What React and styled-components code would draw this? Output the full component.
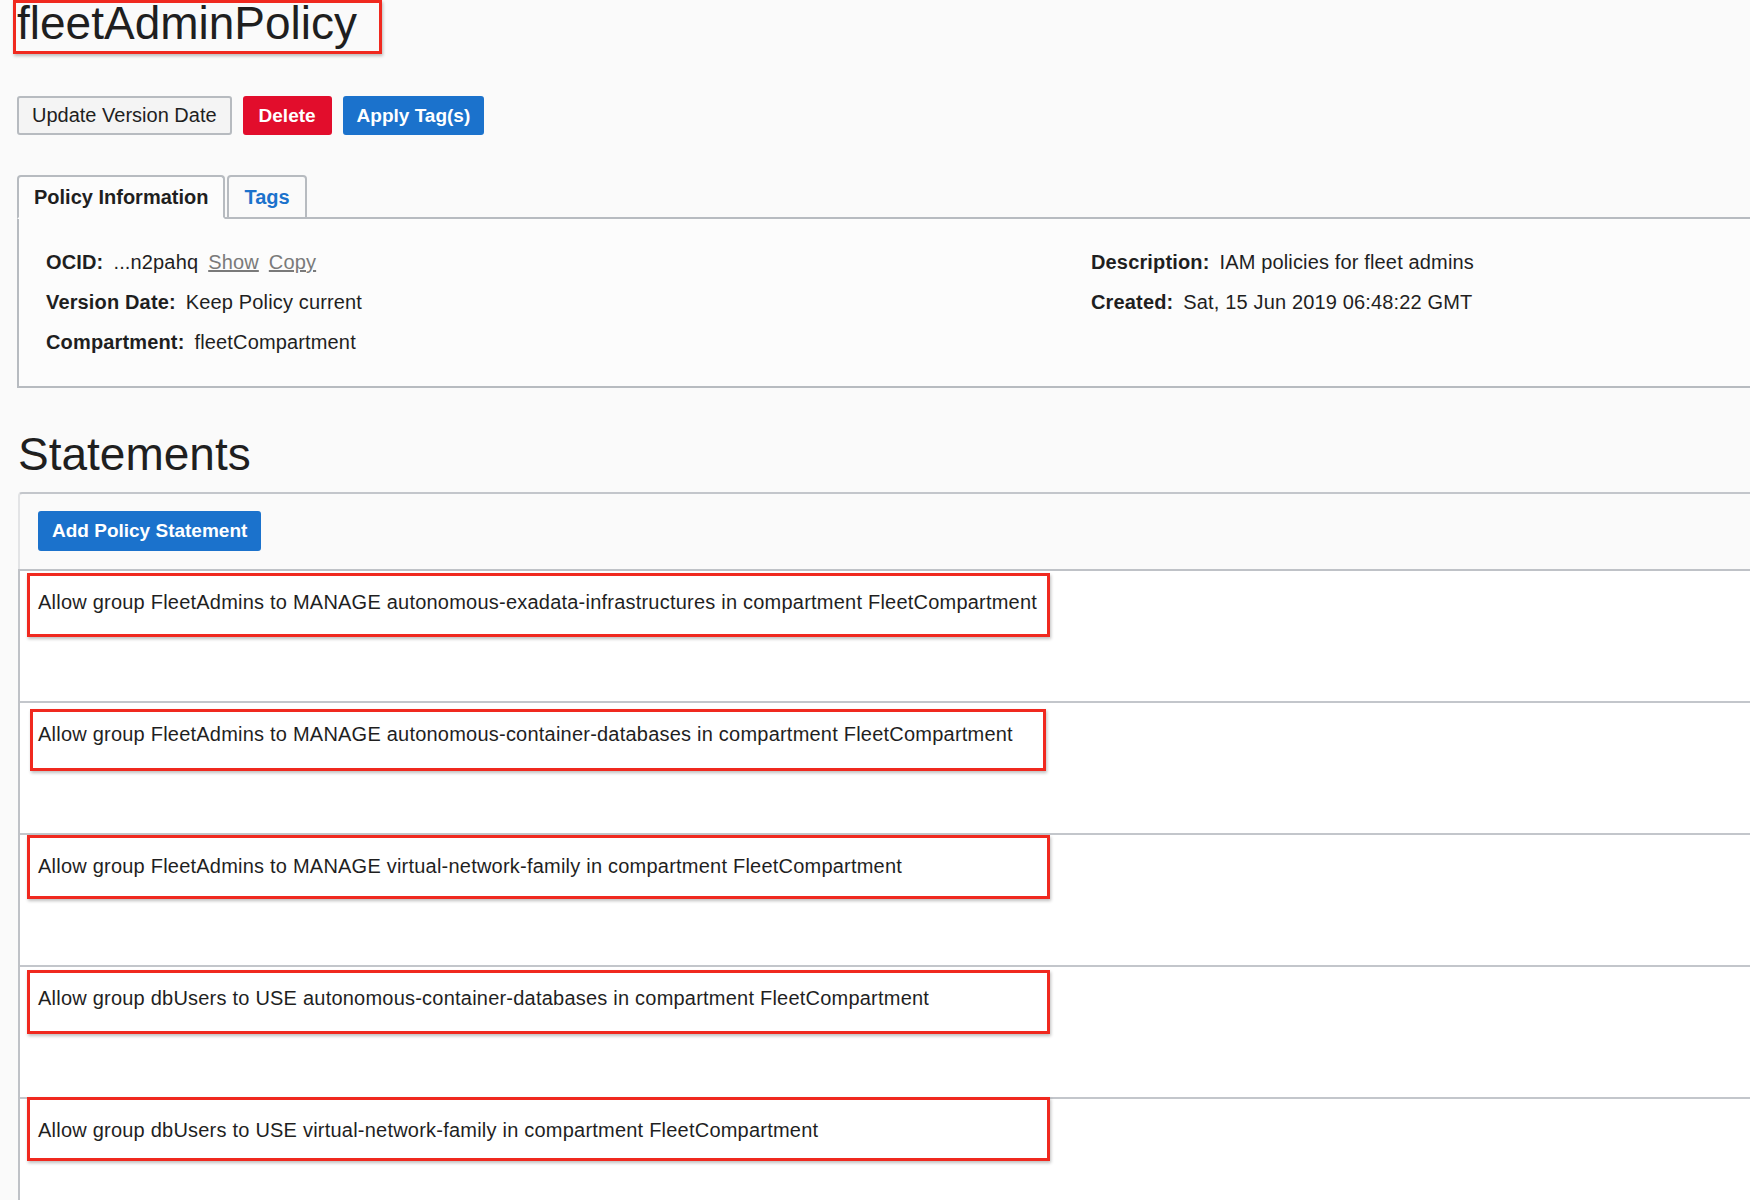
import React from "react";
import styled, { createGlobalStyle, css } from "styled-components";

const FONT = `"Liberation Sans", Arial, Helvetica, sans-serif`;

const GlobalStyle = createGlobalStyle`
  html, body {
    margin: 0;
    padding: 0;
    background: #fafafa;
    overflow: hidden;
  }
  body {
    font-family: ${FONT};
    color: #1f1f1f;
  }
  * {
    box-sizing: border-box;
  }
`;

const BORDER = "#b7bbc0";

// ----- Page -----
const Page = styled.div`
  width: 1750px;
  padding-left: 17px;
`;

// 제목 + 빨간 표시
const TitleMark = styled.div`
  width: fit-content;
  margin-left: -4px;
  padding: 0 22px 8px 1px;
  border: 3px solid #f0291f;
  box-shadow: 1px 2px 3px rgba(0, 0, 0, 0.25);
`;
const Title = styled.h1`
  margin: 0;
  font-size: 46px;
  line-height: 40px;
  font-weight: 400;
  color: #1f1f1f;
`;

// 버튼
const ActionBar = styled.div`
  display: flex;
  gap: 11px;
  margin-top: 42px;
`;
const Button = styled.button`
  height: ${({ $tall }) => ($tall ? "40px" : "39px")};
  padding: 0 12px;
  border-radius: 3px;
  border: 2px solid transparent;
  font-family: ${FONT};
  font-size: 19px;
  font-weight: 700;
  color: #fff;
  cursor: pointer;

  ${({ $variant }) => {
    switch ($variant) {
      case "danger":
        return css`
          background: #e20d2c;
          border-color: #e20d2c;
          padding: 0 14px;
        `;
      case "primary":
        return css`
          background: #1b72cc;
          border-color: #1b72cc;
        `;
      default:
        return css`
          background: #f4f4f4;
          border-color: ${BORDER};
          color: #1f1f1f;
          font-size: 20px;
          font-weight: 400;
          padding: 0 13px;
        `;
    }
  }}
`;

// 탭
const TabList = styled.div`
  display: flex;
  gap: 2px;
  margin-top: 40px;
  border-bottom: 2px solid ${BORDER};
`;
const Tab = styled.button`
  height: 44px;
  margin-bottom: -2px;
  padding: 0 15px;
  border: 2px solid ${BORDER};
  border-radius: 4px 4px 0 0;
  font-family: ${FONT};
  font-size: 20px;
  font-weight: 700;
  cursor: pointer;
  background: ${({ $active }) => ($active ? "#fcfcfc" : "#fafafa")};
  color: ${({ $active }) => ($active ? "#1f1f1f" : "#1b72cc")};
  border-bottom-color: ${({ $active }) => ($active ? "#fcfcfc" : BORDER)};
`;

// 정보 패널
const InfoPanel = styled.div`
  display: grid;
  grid-template-columns: 1045px 1fr;
  padding: 31px 0 32px 27px;
  background: #fcfcfc;
  border-left: 2px solid ${BORDER};
  border-bottom: 2px solid ${BORDER};
`;
const FieldList = styled.div`
  display: flex;
  flex-direction: column;
  gap: 16px;
`;
const Field = styled.div`
  display: flex;
  align-items: center;
  gap: 10px;
  font-size: 20px;
  line-height: 24px;
  letter-spacing: 0.15px;
  color: #1f1f1f;
`;
const Label = styled.span`
  font-weight: 700;
`;
const TextLink = styled.a`
  color: #7a7a7a;
  text-decoration: underline;
  cursor: pointer;
`;

// Statements 섹션
const SectionTitle = styled.h2`
  margin: 43px 0 15px 1px;
  font-size: 46px;
  line-height: 46px;
  font-weight: 400;
  color: #1f1f1f;
`;
const Toolbar = styled.div`
  margin-left: 1px;
  padding: 17px 0 18px 18px;
  border-top: 2px solid #c3c6cb;
  border-left: 2px solid #e3e4e6;
  border-top-left-radius: 4px;
`;
const StatementList = styled.div`
  margin-left: 1px;
  background: #fff;
  border-top: 2px solid #bfc2c7;
  border-left: 2px solid #bfc2c7;
`;
const StatementRow = styled.div`
  position: relative;
  height: 132px;
  border-bottom: 2px solid #c3c6cb;
`;
const StatementText = styled.div`
  padding: 19px 0 0 18px;
  font-size: 20px;
  line-height: 24px;
  letter-spacing: 0.22px;
  color: #1f1f1f;
`;
// 스크린샷 위 빨간 주석 박스
const Annot = styled.span`
  position: absolute;
  border: 3px solid #f0291f;
  box-shadow: 1px 2px 3px rgba(0, 0, 0, 0.25);
  pointer-events: none;
`;

const STATEMENTS = [
  {
    id: 1,
    text: "Allow group FleetAdmins to MANAGE autonomous-exadata-infrastructures in compartment FleetCompartment",
    box: { top: 2, left: 7, width: 1023, height: 64 },
  },
  {
    id: 2,
    text: "Allow group FleetAdmins to MANAGE autonomous-container-databases in compartment FleetCompartment",
    box: { top: 6, left: 10, width: 1016, height: 62 },
  },
  {
    id: 3,
    text: "Allow group FleetAdmins to MANAGE virtual-network-family in compartment FleetCompartment",
    box: { top: 0, left: 7, width: 1023, height: 64 },
  },
  {
    id: 4,
    text: "Allow group dbUsers to USE autonomous-container-databases in compartment FleetCompartment",
    box: { top: 3, left: 7, width: 1023, height: 64 },
  },
  {
    id: 5,
    text: "Allow group dbUsers to USE virtual-network-family in compartment FleetCompartment",
    box: { top: -2, left: 7, width: 1023, height: 64 },
  },
];

// ----- Component -----
const App = () => {
  return (
    <>
      <GlobalStyle />
      <Page>
        <TitleMark>
          <Title>fleetAdminPolicy</Title>
        </TitleMark>

        <ActionBar>
          <Button>Update Version Date</Button>
          <Button $variant="danger">Delete</Button>
          <Button $variant="primary">Apply Tag(s)</Button>
        </ActionBar>

        <TabList>
          <Tab $active>Policy Information</Tab>
          <Tab>Tags</Tab>
        </TabList>

        <InfoPanel>
          <FieldList>
            <Field>
              <Label>OCID:</Label>
              <span>...n2pahq</span>
              <TextLink>Show</TextLink>
              <TextLink>Copy</TextLink>
            </Field>
            <Field>
              <Label>Version Date:</Label>
              <span>Keep Policy current</span>
            </Field>
            <Field>
              <Label>Compartment:</Label>
              <span>fleetCompartment</span>
            </Field>
          </FieldList>
          <FieldList>
            <Field>
              <Label>Description:</Label>
              <span>IAM policies for fleet admins</span>
            </Field>
            <Field>
              <Label>Created:</Label>
              <span>Sat, 15 Jun 2019 06:48:22 GMT</span>
            </Field>
          </FieldList>
        </InfoPanel>

        <SectionTitle>Statements</SectionTitle>
        <Toolbar>
          <Button $variant="primary" $tall>
            Add Policy Statement
          </Button>
        </Toolbar>
        <StatementList>
          {STATEMENTS.map((s) => (
            <StatementRow key={s.id}>
              <StatementText>{s.text}</StatementText>
              <Annot style={s.box} />
            </StatementRow>
          ))}
        </StatementList>
      </Page>
    </>
  );
};

export default App;
